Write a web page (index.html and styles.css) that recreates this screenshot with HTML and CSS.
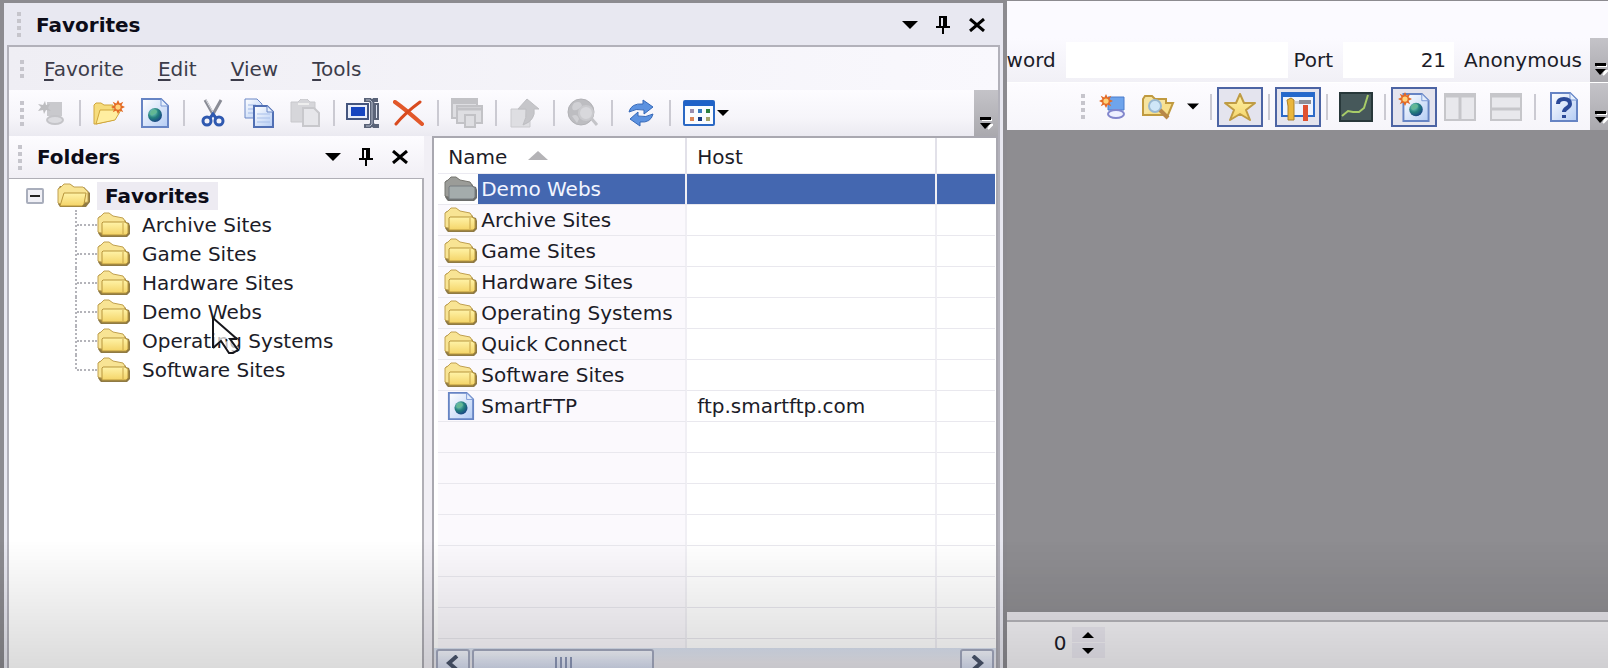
FILE: index.html
```html
<!DOCTYPE html>
<html lang="en">
<head>
    <meta charset="UTF-8">
    <meta name="viewport" content="width=device-width, initial-scale=1.0">
    <title>Favorites</title>
    <link rel="stylesheet" href="styles.css">
</head>
<body>
    <!-- Shared icons -->
    <svg class="sprite" aria-hidden="true">
        <defs>
            <linearGradient id="gold" x1="0" y1="0" x2="0" y2="1">
                <stop offset="0" stop-color="#fff3a8"/>
                <stop offset="1" stop-color="#f4d468"/>
            </linearGradient>
            <linearGradient id="paper" x1="0" y1="0" x2="1" y2="1">
                <stop offset="0" stop-color="#ffffff"/>
                <stop offset="1" stop-color="#b4ccf4"/>
            </linearGradient>
            <radialGradient id="world" cx="0.35" cy="0.3" r="0.8">
                <stop offset="0" stop-color="#8fd8d0"/>
                <stop offset="0.5" stop-color="#23807c"/>
                <stop offset="1" stop-color="#173a86"/>
            </radialGradient>
        </defs>
        <symbol id="folder" viewBox="0 0 34 26">
            <path d="M3 24 L1 21 V6 L3 4 H5 L7 2 H13 L16 5 L26 7 L29 9 V10 L32 11 L33 14 V22 L30 25 H4Z" fill="#8f7a44"/>
            <path d="M1 20 V6 L4 4 L7 1 H12 L16 4 L26 6 L28 9 V21 H4Z" fill="#f8e494" stroke="#c0a050"/>
            <path d="M6 10 H28 L31 12 V21 L29 23 H5 L5 11Z" fill="url(#gold)" stroke="#b8963c"/>
            <path d="M26 11 V22" stroke="#c8a548" fill="none"/>
        </symbol>
        <symbol id="folder-open" viewBox="0 0 34 26">
            <path d="M3 24 L1 21 V6 L3 3 H5 L7 1 H13 L17 4 H27 L30 7 L33 10 V19 L29 24Z" fill="#8f7a44"/>
            <path d="M1 20 V6 L4 4 L7 1 H13 L17 4 H26 L31 9 V19 L6 22Z" fill="#f8e494" stroke="#c0a050"/>
            <path d="M7 10 H29 L27 21 L25 23 H3Z" fill="url(#gold)" stroke="#b8963c"/>
        </symbol>
        <symbol id="folder-gray" viewBox="0 0 34 26">
            <path d="M3 24 L1 21 V6 L3 4 H5 L7 2 H13 L16 5 L26 7 L29 9 V10 L32 11 L33 14 V22 L30 25 H4Z" fill="#6d6e6c"/>
            <path d="M1 20 V6 L4 4 L7 1 H12 L16 4 L26 6 L28 9 V21 H4Z" fill="#9b9c98" stroke="#777670"/>
            <path d="M6 10 H28 L31 12 V21 L29 23 H5 L5 11Z" fill="#a4acac" stroke="#777c80"/>
        </symbol>
        <symbol id="site" viewBox="0 0 28 30">
            <path d="M1 1 H20 L27 8 V29 H1Z" fill="url(#paper)" stroke="#6684c4" stroke-width="2"/>
            <path d="M20 1 V8 H27Z" fill="#e4eefc" stroke="#7a98d4"/>
            <circle cx="14" cy="17" r="7" fill="url(#world)"/>
            <path d="M10 13 q4 -3 6 0 q0 3 -3 3 q-2 3 -4 0Z" fill="#62b894"/>
        </symbol>
        <symbol id="spark" viewBox="0 0 16 16">
            <path d="M8 0 L10 4 L14 2 L12 6 L16 8 L12 10 L14 14 L10 12 L8 16 L6 12 L2 14 L4 10 L0 8 L4 6 L2 2 L6 4Z" fill="#e46a24"/>
            <circle cx="8" cy="8" r="3" fill="#ffd27a"/>
        </symbol>
        <symbol id="caret" viewBox="0 0 16 8">
            <path d="M0 0 H16 L8 8Z" fill="#000"/>
        </symbol>
        <symbol id="pin" viewBox="0 0 14 18">
            <path d="M3 1 H11 M4 1 V10 M10 1 V10 M8 1 V10 M0 11 H14 M7 11 V18" stroke="#000" stroke-width="2" fill="none"/>
        </symbol>
        <symbol id="close" viewBox="0 0 18 14">
            <path d="M2 1 L16 13 M16 1 L2 13" stroke="#000" stroke-width="3" fill="none"/>
        </symbol>
        <symbol id="more" viewBox="0 0 14 14">
            <path d="M3 4 H13 M6 10 L13 9 L9 13" stroke="#fff" stroke-width="2" fill="none"/>
            <path d="M1 1 H12 V4 H1Z M1 7 H12 L6 13Z" fill="#000"/>
        </symbol>
    </svg>

    <!-- Docked favorites window -->
    <section class="favorites">
        <header class="titlebar">
            <span class="grip"></span>
            <h1>Favorites</h1>
            <div class="controls">
                <button aria-label="Options"><svg width="16" height="8"><use href="#caret"/></svg></button>
                <button aria-label="Pin"><svg width="14" height="18"><use href="#pin"/></svg></button>
                <button aria-label="Close"><svg width="18" height="14"><use href="#close"/></svg></button>
            </div>
        </header>

        <div class="frame">
            <nav class="menubar">
                <span class="grip grip-short"></span>
                <button><u>F</u>avorite</button>
                <button><u>E</u>dit</button>
                <button><u>V</u>iew</button>
                <button><u>T</u>ools</button>
            </nav>

            <div class="toolbar">
                <span class="grip"></span>
                <button class="tool" aria-label="Connect" disabled>
                    <svg width="26" height="26" viewBox="0 0 26 26"><path d="M9 2 H24 V16 H9Z" fill="#c9c9cd"/><ellipse cx="17" cy="20" rx="8" ry="4" fill="#dcdce0" stroke="#c4c4c8" stroke-width="2"/><path d="M7 1 L8 5 L12 4 L10 8 L13 11 L8 10 L6 14 L5 10 L0 11 L3 7 L0 4 L5 5Z" fill="#bdbdc0"/></svg>
                </button>
                <span class="separator"></span>
                <button class="tool" aria-label="New folder">
                    <svg width="32" height="26" viewBox="0 0 32 26"><path d="M1 24 V5 L3 3 H8 L11 5 H20 V10 H27 L21 20 L3 24Z" fill="#f6dc7c" stroke="#d0a63c"/><path d="M7 10 H28 L22 20 L3 24Z" fill="#ffeea0" stroke="#d0a63c"/><use href="#spark" x="18" y="0" width="14" height="14"/></svg>
                </button>
                <button class="tool" aria-label="New favorite"><svg width="28" height="30"><use href="#site"/></svg></button>
                <span class="separator"></span>
                <button class="tool" aria-label="Cut">
                    <svg width="24" height="28" viewBox="0 0 24 28" fill="none"><path d="M4 1 L13 17 M20 1 L11 17" stroke="#8a8c96" stroke-width="3"/><path d="M5 1 L14 17" stroke="#d8dae0"/><ellipse cx="6" cy="22" rx="4" ry="4" stroke="#2f59b0" stroke-width="3"/><ellipse cx="18" cy="22" rx="4" ry="4" stroke="#2f59b0" stroke-width="3"/><path d="M9 19 L12 15 L15 19" stroke="#2f59b0" stroke-width="3"/></svg>
                </button>
                <button class="tool" aria-label="Copy">
                    <svg width="30" height="30" viewBox="0 0 30 30"><path d="M1 1 H13 L18 6 V20 H1Z" fill="url(#paper)" stroke="#6a87c6"/><path d="M4 7 H12 M4 11 H12 M4 15 H12" stroke="#9fb8e6"/><path d="M10 8 H23 L29 14 V29 H10Z" fill="url(#paper)" stroke="#506fb4" stroke-width="2"/><path d="M23 8 V14 H29" fill="#e4eefc" stroke="#6a87c6"/><path d="M13 16 H26 M13 20 H26 M13 24 H26" stroke="#a9c0ea"/></svg>
                </button>
                <button class="tool" aria-label="Paste" disabled>
                    <svg width="30" height="28" viewBox="0 0 30 28"><path d="M1 3 H8 L11 0 H17 L20 3 H25 V23 H1Z" fill="#d6d6da" stroke="#c8c8cc"/><path d="M8 5 H19" stroke="#eee" stroke-width="2"/><path d="M13 9 H24 L29 14 V27 H13Z" fill="#e6e6ea" stroke="#c8c8cc" stroke-width="2"/></svg>
                </button>
                <span class="separator"></span>
                <button class="tool" aria-label="Rename">
                    <svg width="34" height="30" viewBox="0 0 34 30"><path d="M1 6 H22 V21 H1Z" fill="#e9eefa" stroke="#44557e" stroke-width="2"/><path d="M5 9 H19 V18 H5Z" fill="#1746c0"/><path d="M29 6 H32 V21 H29Z" fill="#dfe5f4" stroke="#5a6378" stroke-width="2"/><path d="M18 2 H24 L26 4 L28 2 H32 M26 4 V26 M18 28 H24 L26 26 L28 28 H33" fill="none" stroke="#5a6378" stroke-width="4"/><path d="M20 2 H24 L26 4 V26 L24 28 H20" fill="none" stroke="#b4bccb"/></svg>
                </button>
                <button class="tool" aria-label="Delete">
                    <svg width="32" height="26" viewBox="0 0 32 26" fill="none"><path d="M2 2 Q12 9 29 24" stroke="#e2582a" stroke-width="4" stroke-linecap="round"/><path d="M27 2 Q12 13 3 24" stroke="#d94a1e" stroke-width="3" stroke-linecap="round"/></svg>
                </button>
                <span class="separator"></span>
                <button class="tool" aria-label="Properties" disabled>
                    <svg width="32" height="30" viewBox="0 0 32 30" fill="#dedee2" stroke="#c2c2c6" stroke-width="2"><path d="M1 1 H26 V20 H1Z"/><path d="M1 4 H26" stroke-width="4"/><path d="M6 8 H31 V25 H6Z"/><path d="M6 11 H31" stroke-width="3"/><path d="M14 17 H24 V29 H14Z"/></svg>
                </button>
                <span class="separator"></span>
                <button class="tool" aria-label="Up" disabled>
                    <svg width="30" height="30" viewBox="0 0 30 30"><path d="M1 11 H16 L20 15 V29 H1Z" fill="#dedee2" stroke="#cacace"/><path d="M17 1 L29 11 H24 Q26 22 13 27 Q17 20 16 11 H8Z" fill="#c6c6ca" stroke="#bebec2"/></svg>
                </button>
                <span class="separator"></span>
                <button class="tool" aria-label="Browse" disabled>
                    <svg width="32" height="30" viewBox="0 0 32 30"><circle cx="14" cy="14" r="13" fill="#bdbdc1" stroke="#b2b2b6"/><path d="M7 5 Q14 2 15 8 Q11 13 6 12 Q4 9 7 5Z M5 18 Q10 15 12 21 L10 25Z" fill="#d0d0d4"/><circle cx="19" cy="15" r="7" fill="#d8d8dc" stroke="#cacace" stroke-width="2"/><path d="M24 20 L30 27" stroke="#c4c4c8" stroke-width="3"/></svg>
                </button>
                <span class="separator"></span>
                <button class="tool" aria-label="Refresh">
                    <svg width="26" height="28" viewBox="0 0 26 28"><path d="M1 13 Q3 4 15 5 V1 L25 8 L16 15 V11 Q8 9 1 13Z" fill="#5c92e0" stroke="#3568b8"/><path d="M25 15 Q23 24 12 23 V27 L2 20 L10 13 V17 Q18 19 25 15Z" fill="#5c92e0" stroke="#3568b8"/></svg>
                </button>
                <span class="separator"></span>
                <button class="tool views" aria-label="Views">
                    <svg width="32" height="26" viewBox="0 0 32 26"><rect x="1" y="1" width="30" height="24" rx="1" fill="#fafcff" stroke="#2a68c4" stroke-width="2"/><path d="M1 1 H31 V6 H1Z" fill="#1f62c8"/><path d="M7 9 h4 v4 h-4Z" fill="#9c8fae"/><path d="M15 9 h4 v4 h-4Z" fill="#3b7cc0"/><path d="M23 9 h4 v4 h-4Z" fill="#2c8040"/><path d="M7 17 h4 v4 h-4Z" fill="#dc8658"/><path d="M15 17 h4 v4 h-4Z" fill="#173a80"/><path d="M23 17 h4 v4 h-4Z" fill="#a5a46c"/></svg>
                    <svg width="12" height="6"><use href="#caret"/></svg>
                </button>
                <button class="overflow" aria-label="More"><svg width="14" height="14"><use href="#more"/></svg></button>
            </div>

            <div class="panes">
                <aside class="folders">
                    <header class="pane-title">
                        <span class="grip"></span>
                        <h2>Folders</h2>
                        <div class="controls">
                            <button aria-label="Folder options"><svg width="16" height="8"><use href="#caret"/></svg></button>
                            <button aria-label="Pin folders"><svg width="14" height="18"><use href="#pin"/></svg></button>
                            <button aria-label="Close folders"><svg width="18" height="14"><use href="#close"/></svg></button>
                        </div>
                    </header>
                    <div class="tree">
                        <div class="tree-root">
                            <button class="toggle" aria-label="Collapse"></button>
                            <svg width="34" height="26"><use href="#folder-open"/></svg>
                            <strong>Favorites</strong>
                        </div>
                        <ul>
                            <li><svg width="34" height="26"><use href="#folder"/></svg>Archive Sites</li>
                            <li><svg width="34" height="26"><use href="#folder"/></svg>Game Sites</li>
                            <li><svg width="34" height="26"><use href="#folder"/></svg>Hardware Sites</li>
                            <li><svg width="34" height="26"><use href="#folder"/></svg>Demo Webs</li>
                            <li><svg width="34" height="26"><use href="#folder"/></svg>Operating Systems</li>
                            <li><svg width="34" height="26"><use href="#folder"/></svg>Software Sites</li>
                        </ul>
                        <svg class="cursor" width="30" height="38" viewBox="0 0 30 38"><path d="M1 1 L25 22 H14 L1 31Z M10 26 L18 36 L27 32 L21 22Z" fill="#fff" fill-opacity="0.7"/><path d="M1 31 V1 L25 22 M1 31 L9 24 L17 36 H21 L26 33 L18 22 H25" fill="none" stroke="#16161c" stroke-width="2"/></svg>
                    </div>
                </aside>

                <main class="list">
                    <div class="list-body">
                        <table>
                            <colgroup><col class="col-name"><col class="col-host"><col></colgroup>
                            <thead>
                                <tr><th>Name <svg width="20" height="9" viewBox="0 0 20 9"><path d="M0 9 L10 0 L20 9Z" fill="#b4b3b6"/></svg></th><th>Host</th><th></th></tr>
                            </thead>
                            <tbody>
                                <tr class="selected"><td><div class="item"><svg width="34" height="26"><use href="#folder-gray"/></svg><span>Demo Webs</span></div></td><td></td><td></td></tr>
                                <tr><td><div class="item"><svg width="34" height="26"><use href="#folder"/></svg><span>Archive Sites</span></div></td><td></td><td></td></tr>
                                <tr><td><div class="item"><svg width="34" height="26"><use href="#folder"/></svg><span>Game Sites</span></div></td><td></td><td></td></tr>
                                <tr><td><div class="item"><svg width="34" height="26"><use href="#folder"/></svg><span>Hardware Sites</span></div></td><td></td><td></td></tr>
                                <tr><td><div class="item"><svg width="34" height="26"><use href="#folder"/></svg><span>Operating Systems</span></div></td><td></td><td></td></tr>
                                <tr><td><div class="item"><svg width="34" height="26"><use href="#folder"/></svg><span>Quick Connect</span></div></td><td></td><td></td></tr>
                                <tr><td><div class="item"><svg width="34" height="26"><use href="#folder"/></svg><span>Software Sites</span></div></td><td></td><td></td></tr>
                                <tr><td><div class="item"><svg width="34" height="28"><use href="#site"/></svg><span>SmartFTP</span></div></td><td>ftp.smartftp.com</td><td></td></tr>
                                <tr><td></td><td></td><td></td></tr>
                                <tr><td></td><td></td><td></td></tr>
                                <tr><td></td><td></td><td></td></tr>
                                <tr><td></td><td></td><td></td></tr>
                                <tr><td></td><td></td><td></td></tr>
                                <tr><td></td><td></td><td></td></tr>
                                <tr><td></td><td></td><td></td></tr>
                                <tr><td></td><td></td><td></td></tr>
                            </tbody>
                        </table>
                    </div>
                    <div class="scrollbar">
                        <button aria-label="Scroll left"><svg width="14" height="16" viewBox="0 0 14 16"><path d="M11 1 L3 8 L11 15" fill="none" stroke="#4a556c" stroke-width="4"/></svg></button>
                        <div class="thumb"><i></i><i></i><i></i><i></i></div>
                        <button class="scroll-right" aria-label="Scroll right"><svg width="14" height="16" viewBox="0 0 14 16"><path d="M3 1 L11 8 L3 15" fill="none" stroke="#4a556c" stroke-width="4"/></svg></button>
                    </div>
                </main>
            </div>
        </div>
    </section>

    <!-- Main application window behind -->
    <section class="workspace">
        <div class="address">
            <label for="password">word</label>
            <input type="password" id="password">
            <label for="port">Port</label>
            <input type="text" id="port" value="21">
            <button class="anonymous">Anonymous</button>
            <button class="overflow" aria-label="More"><svg width="14" height="14"><use href="#more"/></svg></button>
        </div>
        <div class="toolbar toolbar-main">
            <span class="grip"></span>
            <button class="tool" aria-label="New connection">
                <svg width="26" height="26" viewBox="0 0 26 26"><path d="M9 3 H25 V16 H9Z" fill="#6ea4ec" stroke="#4a7ccc"/><ellipse cx="17" cy="20" rx="8" ry="4" fill="#eef0ff" stroke="#8286cc" stroke-width="2"/><use href="#spark" x="0" y="0" width="14" height="14"/></svg>
            </button>
            <button class="tool" aria-label="Open folder">
                <svg width="34" height="26" viewBox="0 0 34 26"><path d="M2 21 V5 L4 2 H11 L14 5 H25 V21Z" fill="#f6e4a0" stroke="#c09a40" stroke-width="2"/><path d="M24 9 H32 L27 21 H3" fill="#f8e08c" stroke="#c09a40" stroke-width="2"/><circle cx="14" cy="12" r="6" fill="#cfe6f8" stroke="#9ab8d0" stroke-width="2"/><path d="M19 16 L27 24" stroke="#b88848" stroke-width="4"/></svg>
            </button>
            <span class="dropdown"><svg width="12" height="7"><use href="#caret"/></svg></span>
            <span class="separator"></span>
            <button class="tool active" aria-label="Favorites">
                <svg width="32" height="28" viewBox="0 0 32 28"><path d="M16 1 L20 10 L31 10 L22 17 L26 27 L16 21 L6 27 L10 17 L1 10 L12 10Z" fill="url(#gold)" stroke="#bf9c44" stroke-width="2" stroke-linejoin="round"/></svg>
            </button>
            <span class="separator"></span>
            <button class="tool active" aria-label="Transfer queue">
                <svg width="34" height="30" viewBox="0 0 34 30"><rect x="1" y="1" width="32" height="23" fill="#eef4ff" stroke="#2c6ac8" stroke-width="2"/><path d="M1 1 H33 V5 H1Z" fill="#2468cc"/><path d="M6 8 L10 6 L13 8 V28 H7 V14Z" fill="#eab63c" stroke="#ab8028"/><path d="M14 9 H19 V12 H14Z" fill="#c8ccd4"/><path d="M22 13 H27 V29 H22Z" fill="#e05030"/><path d="M18 8 H30 V12 H18Z" fill="#8c8f98"/></svg>
            </button>
            <span class="separator"></span>
            <button class="tool" aria-label="Speed graph">
                <svg width="34" height="30" viewBox="0 0 34 30"><rect x="1" y="1" width="32" height="28" fill="#46585a" stroke="#28383a" stroke-width="2"/><path d="M3 24 L9 19 L14 20 L20 20 L25 16 L29 3" fill="none" stroke="#a8cc68" stroke-width="2"/></svg>
            </button>
            <span class="separator"></span>
            <button class="tool active" aria-label="Remote browser">
                <svg width="32" height="30" viewBox="0 0 32 30"><use href="#site" x="4" y="1" width="28" height="29"/><use href="#spark" x="0" y="0" width="14" height="14"/></svg>
            </button>
            <button class="tool" aria-label="Split vertically" disabled>
                <svg width="32" height="28" viewBox="0 0 32 28"><rect x="1" y="1" width="30" height="26" fill="#e8e8ec" stroke="#c6c6ca" stroke-width="2"/><path d="M1 3 H31 M16 3 V27" stroke="#c6c6ca" stroke-width="3"/></svg>
            </button>
            <button class="tool" aria-label="Split horizontally" disabled>
                <svg width="32" height="28" viewBox="0 0 32 28"><rect x="1" y="1" width="30" height="26" fill="#e8e8ec" stroke="#c6c6ca" stroke-width="2"/><path d="M1 3 H31 M1 16 H31" stroke="#c6c6ca" stroke-width="3"/></svg>
            </button>
            <span class="separator"></span>
            <button class="tool help" aria-label="Help">
                <svg width="28" height="30" viewBox="0 0 28 30"><path d="M1 1 H20 L27 8 V29 H1Z" fill="url(#paper)" stroke="#6684c4" stroke-width="2"/><path d="M20 1 V8 H27Z" fill="#e4eefc" stroke="#7a98d4"/><path d="M8 12 Q8 7 14 7 Q20 7 20 12 Q20 14 17 16 Q14 18 14 20 M14 23 V26" fill="none" stroke="#2b4a98" stroke-width="4"/></svg>
            </button>
            <button class="overflow" aria-label="More"><svg width="14" height="14"><use href="#more"/></svg></button>
        </div>
        <div class="canvas"></div>
        <footer class="statusbar">
            <input type="text" class="count" value="0" aria-label="Count">
            <div class="spinner">
                <button aria-label="Increase"><svg width="12" height="6" viewBox="0 0 12 6"><path d="M0 6 L6 0 L12 6Z"/></svg></button>
                <button aria-label="Decrease"><svg width="12" height="6" viewBox="0 0 12 6"><path d="M0 0 H12 L6 6Z"/></svg></button>
            </div>
        </footer>
    </section>
</body>
</html>
```
FILE: styles.css
```css
* {
    box-sizing: border-box;
}

body {
    margin: 0;
    height: 100vh;
    display: flex;
    overflow: hidden;
    background: #8e8d91;
    color: #1c1c28;
    font-family: "DejaVu Sans", Verdana, sans-serif;
    font-size: 20px;
    line-height: 24px;
}

/* Shade along the bottom edge */
body::after {
    content: "";
    position: fixed;
    left: 0;
    right: 0;
    bottom: 0;
    height: 128px;
    background: linear-gradient(transparent, rgba(0, 0, 0, 0.14));
    pointer-events: none;
}

button,
input {
    padding: 0;
    border: none;
    background: none;
    color: inherit;
    font: inherit;
}

svg {
    display: block;
    flex: none;
}

.sprite {
    position: absolute;
    width: 0;
    height: 0;
}

.grip {
    flex: none;
    width: 4px;
    height: 25px;
    background: repeating-linear-gradient(#c6c5cc 0 4px, transparent 4px 7px);
}

.grip-short {
    height: 18px;
}

/* Favorites window */
.favorites {
    flex: none;
    width: 62.6%;
    display: flex;
    flex-direction: column;
    border: solid #8c8b90;
    border-width: 3px 4px 0;
    background: #e8e8f1;
}

.titlebar {
    display: flex;
    align-items: center;
    height: 42px;
    padding: 1px 17px 0 13px;
}

h1,
h2 {
    margin: 0;
    font-size: 20px;
    color: #0c0c18;
}

.titlebar h1,
.pane-title h2 {
    margin-left: 15px;
}

.controls {
    display: flex;
    align-items: center;
    gap: 18px;
    margin-left: auto;
}

.frame {
    flex: 1;
    min-height: 0;
    display: flex;
    flex-direction: column;
    margin: 0 3px;
    border: 2px solid #b2b1ba;
    border-bottom: none;
    background: #f1eff5;
}

.menubar {
    display: flex;
    align-items: center;
    gap: 34px;
    height: 43px;
    padding-left: 11px;
    background: linear-gradient(90deg, #efeef4, #f9f8fd);
    color: #3c3c4a;
}

.menubar .grip {
    margin-right: -14px;
}

.menubar u {
    text-underline-offset: 3px;
}

.toolbar {
    display: flex;
    align-items: center;
    height: 46px;
    padding-left: 11px;
    background: linear-gradient(#fdfcff, #f6f5fa 60%, #ebeaf1);
}

.toolbar .grip {
    margin-right: 4px;
}

.tool {
    flex: none;
    display: flex;
    align-items: center;
    justify-content: center;
    width: 46px;
    height: 40px;
}

.tool.active {
    border: 2px solid #4c64a4;
    background: #e4e4ee;
}

.tool.views {
    justify-content: flex-start;
    gap: 2px;
    padding-left: 7px;
    width: 56px;
}

.separator {
    flex: none;
    width: 2px;
    height: 26px;
    margin: 0 5px;
    background: #cbcad2;
}

.overflow {
    align-self: stretch;
    flex: none;
    display: flex;
    align-items: flex-end;
    justify-content: center;
    width: 24px;
    margin-left: auto;
    padding-bottom: 6px;
    background: linear-gradient(#c4c3c8, #aaa9ae);
}

/* Folder tree */
.panes {
    flex: 1;
    min-height: 0;
    display: flex;
    gap: 8px;
}

.folders {
    flex: none;
    width: 42%;
    display: flex;
    flex-direction: column;
}

.pane-title {
    display: flex;
    align-items: center;
    height: 42px;
    padding: 0 15px 0 9px;
    background: linear-gradient(#fdfcff, #f1eff5);
}

.tree {
    position: relative;
    flex: 1;
    padding: 2px 0 0 17px;
    border: solid #b0afb6;
    border-width: 1px 2px 0 0;
    background: #fff;
}

.tree-root {
    display: flex;
    align-items: center;
    height: 29px;
}

.tree-root strong {
    margin-left: 6px;
    padding: 2px 8px;
    background: #edebf2;
    color: #0c0c18;
}

.toggle {
    width: 18px;
    height: 16px;
    margin-right: 13px;
    border: 2px solid #a9aebc;
    border-radius: 2px;
    background: linear-gradient(#222, #222) center / 10px 2px no-repeat, #f0f0f6;
}

.tree ul {
    margin: 0 0 0 49px;
    padding: 0;
    list-style: none;
}

.tree li {
    display: flex;
    align-items: center;
    gap: 11px;
    height: 29px;
    border-left: 2px dotted #b4b4ba;
}

.tree li::before {
    content: "";
    width: 20px;
    margin-right: -11px;
    border-top: 2px dotted #b4b4ba;
}

.tree li:last-child {
    border-left-color: transparent;
    background: repeating-linear-gradient(#b4b4ba 0 2px, transparent 2px 4px) -2px 0 / 2px 15px no-repeat border-box;
    background-origin: padding-box;
}

.cursor {
    position: absolute;
    left: 203px;
    top: 138px;
}

/* Favorites list */
.list {
    flex: 1;
    min-width: 0;
    display: flex;
    flex-direction: column;
    border: solid #a9a8b0;
    border-width: 2px 2px 0;
    background: #fff;
}

.list-body {
    flex: 1;
    min-height: 0;
    overflow: hidden;
    padding: 0 1px 0 4px;
}

table {
    width: 100%;
    table-layout: fixed;
    border-collapse: separate;
    border-spacing: 0;
}

.col-name {
    width: 249px;
}

.col-host {
    width: 250px;
}

th {
    height: 36px;
    padding: 3px 0 0 10px;
    border-right: 2px solid #e2e1e9;
    border-bottom: 1px solid #ebeaf1;
    text-align: left;
    font-weight: normal;
}

th svg {
    display: inline-block;
    margin-left: 14px;
    vertical-align: 4px;
}

td {
    height: 31px;
    padding: 0 0 0 10px;
    border-right: 2px solid #f0eff4;
    border-bottom: 1px solid #e9e8ee;
}

td:first-child {
    padding-left: 6px;
    background: #fbf9fd;
}

th:last-child,
td:last-child {
    border-right: none;
}

.item {
    display: flex;
    align-items: center;
    height: 30px;
}

.item span {
    flex: 1;
    padding: 3px 0 3px 3px;
}

.selected td,
.selected .item span {
    background: #4467b0;
    color: #f2f5ff;
}

.selected td:first-child {
    background: #fff;
}

.selected td {
    background-clip: padding-box;
}

.scrollbar {
    flex: none;
    display: flex;
    gap: 2px;
    height: 20px;
    padding: 0 2px;
    overflow: hidden;
    background: linear-gradient(#dbe3f2, #e9e8ee 70%);
}

.scrollbar button,
.thumb {
    flex: none;
    display: flex;
    justify-content: center;
    height: 30px;
    margin-top: 1px;
    padding-top: 4px;
    border: 2px solid #a4aac0;
    border-radius: 3px;
    background: linear-gradient(#f4f6fd, #c8d2ec);
}

.scrollbar button {
    width: 34px;
}

.scrollbar .scroll-right {
    margin-left: auto;
}

.thumb {
    gap: 3px;
    width: 182px;
}

.thumb i {
    width: 2px;
    height: 14px;
    margin-top: 2px;
    background: #8d98b8;
}

/* Application window */
.workspace {
    flex: 1;
    min-width: 0;
    display: flex;
    flex-direction: column;
    border-top: 1px solid #8c8b90;
    background: #fbfaff;
}

.address {
    display: flex;
    align-items: center;
    height: 44px;
    margin-top: 37px;
    background: linear-gradient(#fbfaff, #f1f0f6);
}

.address input {
    height: 36px;
    background: #fff;
}

#password {
    flex: 1;
    min-width: 0;
    margin: 0 5px 0 10px;
}

#port {
    width: 111px;
    margin: 0 10px;
    padding-right: 8px;
    text-align: right;
}

.anonymous {
    margin-right: 8px;
}

.workspace .overflow {
    width: 18px;
    margin-left: 0;
    justify-content: flex-end;
}

.toolbar-main {
    justify-content: flex-end;
    height: 48px;
    padding: 0;
    border-top: 1px solid #fff;
    background: linear-gradient(#fdfcff, #f6f5fa);
}

.dropdown {
    display: flex;
    justify-content: center;
    width: 24px;
}

.help {
    margin-right: 3px;
}

.canvas {
    flex: 1;
    background: #8e8d91;
}

.statusbar {
    display: flex;
    align-items: flex-start;
    height: 56px;
    padding-top: 7px;
    border-top: 8px solid #e6e4ea;
    box-shadow: inset 0 2px #b6b5ba;
    background: #f3f2f5;
}

.count {
    width: 60px;
    height: 32px;
    text-align: right;
}

.spinner {
    display: flex;
    flex-direction: column;
    gap: 1px;
    margin-left: 5px;
}

.spinner button {
    display: flex;
    align-items: center;
    justify-content: center;
    width: 33px;
    height: 15px;
    background: #e8e6ee;
}
```
